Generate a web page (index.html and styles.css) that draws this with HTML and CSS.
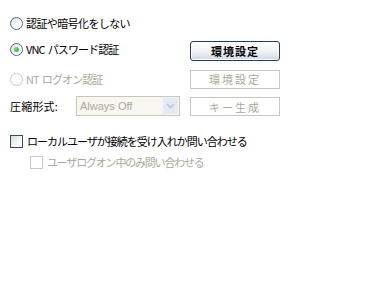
FILE: index.html
```html
<!DOCTYPE html>
<html lang="ja">
<head>
    <meta charset="UTF-8">
    <title>認証設定</title>
    <link rel="stylesheet" href="styles.css">
</head>
<body>
    <div class="panel">
        <div class="row row-none">
            <label class="opt"><span class="radio"></span>認証や暗号化をしない</label>
        </div>

        <div class="row row-vnc">
            <label class="opt lift tight"><span class="radio checked"></span>VNC&nbsp; パスワード認証</label>
            <button class="btn">環境設定</button>
        </div>

        <div class="row row-nt">
            <label class="opt off tight"><span class="radio"></span>NT&nbsp; ログオン認証</label>
            <button class="btn" disabled>環境設定</button>
        </div>

        <div class="row row-comp">
            <div class="comp">
                <span class="comp-label">圧縮形式:</span>
                <div class="select">
                    <span class="select-text">Always Off</span>
                    <span class="select-arrow">
                        <svg width="9" height="6" viewBox="0 0 9 6"><path d="M1 1 L4.5 4.5 L8 1" fill="none" stroke="#b9c4d6" stroke-width="1.6"/></svg>
                    </span>
                </div>
            </div>
            <button class="btn btn-low" disabled>キー生成</button>
        </div>

        <div class="row row-ask">
            <label class="opt"><span class="check"></span>ローカルユーザが接続を受け入れか問い合わせる</label>
        </div>

        <div class="row row-sub">
            <label class="opt off"><span class="check"></span>ユーザログオン中のみ問い合わせる</label>
        </div>
    </div>
</body>
</html>
```

FILE: styles.css
```css
body {
    margin: 0;
    background: #fff;
    font-family: "Noto Sans CJK JP", "DejaVu Sans", sans-serif;
    font-size: 11px;
    color: #000;
}

.panel {
    display: flex;
    flex-direction: column;
    padding: 13px 0 0 10px;
    width: 270px;
}

.row {
    display: flex;
    align-items: center;
    justify-content: space-between;
    height: 20px;
}
.row-vnc { margin-top: 8px; }
.row-nt { margin-top: 9px; height: 18px; }
.row-comp { margin-top: 7px; height: 21px; }
.row-ask { margin-top: 17px; height: 16px; letter-spacing: -1px; }
.row-sub { margin-top: 5px; height: 16px; padding-left: 20px; letter-spacing: -1.2px; }

.opt {
    display: flex;
    align-items: center;
    gap: 3px;
    letter-spacing: -0.6px;
    white-space: nowrap;
}
.row-ask .opt, .row-sub .opt { letter-spacing: inherit; }
.opt.tight { letter-spacing: -0.9px; }
.opt.lift { margin-bottom: 4px; }
.opt.off { color: #aca899; }

.radio {
    width: 11px;
    height: 11px;
    border: 1px solid #4a6a8e;
    border-radius: 50%;
    background: linear-gradient(135deg, #dcdcd7, #fff 70%);
    display: flex;
    align-items: center;
    justify-content: center;
    flex: none;
}
.radio.checked::after {
    content: "";
    width: 5px;
    height: 5px;
    border-radius: 50%;
    background: radial-gradient(circle at 40% 40%, #7ee07e, #21a121);
}
.off .radio {
    border-color: #cac8bb;
    background: #fff;
}

.check {
    width: 11px;
    height: 11px;
    border: 1px solid #2c4d72;
    background: linear-gradient(135deg, #dcdcd7, #fff 80%);
    flex: none;
    margin-right: 1px;
}
.off .check {
    border-color: #cac8bb;
    background: #fff;
}

.btn {
    width: 90px;
    height: 20px;
    margin: 0;
    padding: 0;
    border: 1px solid #1f3c6b;
    border-radius: 3px;
    background: linear-gradient(#fff, #f4f5f8 45%, #d2d8e4);
    box-shadow: inset 0 0 0 1px #fff;
    font-family: inherit;
    font-size: 11px;
    font-weight: bold;
    letter-spacing: 1px;
    color: #000;
}
.btn:disabled {
    height: 19px;
    border-color: #c9c7ba;
    border-radius: 0;
    background: #fff;
    box-shadow: none;
    font-weight: normal;
    letter-spacing: 2px;
    color: #aca899;
}
.btn-low { align-self: flex-end; }

.comp {
    display: flex;
    align-items: center;
}
.comp-label {
    width: 66px;
    letter-spacing: 0.2px;
}
.select {
    width: 102px;
    height: 18px;
    border: 1px solid #c9c7ba;
    background: #f7f6f1;
    display: flex;
    align-items: center;
    justify-content: space-between;
    font-family: "Liberation Sans", sans-serif;
    color: #aca899;
}
.select-text { padding-left: 3px; }
.select-arrow {
    width: 15px;
    height: 16px;
    margin-right: 1px;
    background: #e4eaf5;
    display: flex;
    align-items: center;
    justify-content: center;
}
```
